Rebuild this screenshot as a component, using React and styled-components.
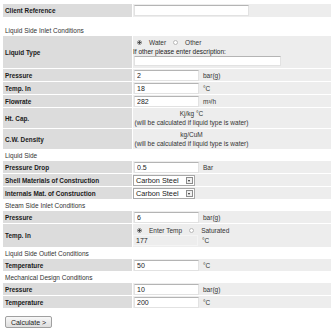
import styled, { createGlobalStyle } from 'styled-components';

const GlobalStyle = createGlobalStyle`
  html, body {
    margin: 0;
    padding: 0;
    background: #ffffff;
  }
`;

export default function App() {
  return (
    <>
      <GlobalStyle />
      <Page>
        <FormTable>
          <Row $h={13}>
            <Label>Client Reference</Label>
            <Value>
              <TextInput $w={115} />
            </Value>
          </Row>

          <Section $gap={7}>Liquid Side Inlet Conditions</Section>
          <Row $h={32}>
            <Label>Liquid Type</Label>
            <Value $stack>
              <RadioLine>
                <Radio $checked /> <span>Water</span>
                <Radio /> <span>Other</span>
              </RadioLine>
              <Hint>If other please enter description:</Hint>
              <TextInput $w={147} $h={10} />
            </Value>
          </Row>
          <InputRow label="Pressure" value="2" unit="bar(g)" />
          <InputRow label="Temp. In" value="18" unit="°C" />
          <InputRow label="Flowrate" value="282" unit="m³/h" />
          <Row $h={20}>
            <Label>Ht. Cap.</Label>
            <Value>
              <Note>
                Kj/kg °C
                <br />
                (will be calculated if liquid type is water)
              </Note>
            </Value>
          </Row>
          <Row $h={20}>
            <Label>C.W. Density</Label>
            <Value>
              <Note>
                kg/CuM
                <br />
                (will be calculated if liquid type is water)
              </Note>
            </Value>
          </Row>

          <Section>Liquid Side</Section>
          <InputRow label="Pressure Drop" value="0.5" unit="Bar" />
          <Row>
            <Label>Shell Materials of Construction</Label>
            <Value>
              <Select>
                Carbon Steel
                <SelectButton />
              </Select>
            </Value>
          </Row>
          <Row>
            <Label>Internals Mat. of Construction</Label>
            <Value>
              <Select>
                Carbon Steel
                <SelectButton />
              </Select>
            </Value>
          </Row>

          <Section>Steam Side Inlet Conditions</Section>
          <InputRow label="Pressure" value="6" unit="bar(g)" />
          <Row $h={23}>
            <Label>Temp. In</Label>
            <Value $stack>
              <RadioLine>
                <Radio $checked /> <span>Enter Temp</span>
                <Radio /> <span>Saturated</span>
              </RadioLine>
              <Field>
                <TextInput $w={65} $flat defaultValue="177" />
                <Unit>°C</Unit>
              </Field>
            </Value>
          </Row>

          <Section>Liquid Side Outlet Conditions</Section>
          <InputRow label="Temperature" value="50" unit="°C" />

          <Section>Mechanical Design Conditions</Section>
          <InputRow label="Pressure" value="10" unit="bar(g)" />
          <InputRow label="Temperature" value="200" unit="°C" />
        </FormTable>

        <CalcButton type="button">Calculate &gt;</CalcButton>
      </Page>
    </>
  );
}

function InputRow({ label, value, unit }) {
  return (
    <Row>
      <Label>{label}</Label>
      <Value>
        <Field>
          <TextInput $w={65} defaultValue={value} />
          <Unit>{unit}</Unit>
        </Field>
      </Value>
    </Row>
  );
}

const Page = styled.div`
  padding: 4px 3px 0 3px;
  font-family: "Liberation Sans", Arial, sans-serif;
  font-size: 6.5px;
  color: #333333;
`;

const FormTable = styled.div`
  display: flex;
  flex-direction: column;
  gap: 1px;
  width: 328px;
`;

const Row = styled.div`
  display: grid;
  grid-template-columns: 129px 1fr;
  column-gap: 1px;
  height: ${(p) => p.$h || 12}px;
`;

const Label = styled.div`
  display: flex;
  align-items: center;
  padding-left: 2px;
  background: #dcdcdc;
  color: #1a1a1a;
  font-weight: bold;
  font-size: 6.4px;
  white-space: nowrap;
`;

const Value = styled.div`
  display: flex;
  flex-direction: ${(p) => (p.$stack ? 'column' : 'row')};
  justify-content: ${(p) => (p.$stack ? 'flex-start' : 'flex-start')};
  align-items: ${(p) => (p.$stack ? 'flex-start' : 'center')};
  padding-top: ${(p) => (p.$stack ? '2px' : '0')};
  background: #ededed;
  white-space: nowrap;
`;

const Section = styled.div`
  display: flex;
  align-items: center;
  height: 10px;
  margin-top: ${(p) => p.$gap || 0}px;
  padding-left: 2px;
  color: #333333;
`;

const Field = styled.div`
  display: flex;
  align-items: center;
  gap: 4px;
`;

const TextInput = styled.input`
  box-sizing: border-box;
  width: ${(p) => p.$w}px;
  height: ${(p) => p.$h || 11}px;
  margin: 0 0 0 ${(p) => (p.$flat ? 0 : 1)}px;
  padding: 0 2px;
  border: 1px solid ${(p) => (p.$flat ? '#f4f4f4' : '#e2e2e2')};
  border-top-color: ${(p) => (p.$flat ? '#f4f4f4' : '#b4b4b4')};
  background: ${(p) => (p.$flat ? '#ededed' : '#ffffff')};
  font-family: "Liberation Sans", Arial, sans-serif;
  font-size: 7px;
  color: #222222;
  outline: none;
`;

const Unit = styled.span`
  color: #333333;
`;

const Hint = styled.div`
  height: 9px;
  line-height: 9px;
  color: #222222;
`;

const Note = styled.div`
  width: 117px;
  text-align: center;
  line-height: 9px;
  color: #333333;
`;

const RadioLine = styled.div`
  display: flex;
  align-items: center;
  gap: 2px;
  height: 9px;
  padding-left: 4px;

  span {
    margin-right: 5px;
  }
`;

const Radio = styled.span`
  box-sizing: border-box;
  width: 5px;
  height: 5px;
  border-radius: 50%;
  border: 1px solid ${(p) => (p.$checked ? '#8a8a8a' : '#b8b8b8')};
  background: ${(p) =>
    p.$checked ? 'radial-gradient(circle, #4a4a4a 0 1.2px, #ffffff 1.4px)' : '#ffffff'};
`;

const Select = styled.div`
  box-sizing: border-box;
  display: flex;
  align-items: center;
  justify-content: space-between;
  width: 62px;
  height: 11px;
  padding: 0 1px 0 2px;
  border: 1px solid #a8a8a8;
  background: #ffffff;
  font-size: 7.3px;
  color: #1a1a1a;
`;

const SelectButton = styled.span`
  position: relative;
  box-sizing: border-box;
  width: 7px;
  height: 7px;
  border: 1px solid #8c8c8c;
  background: #f0f0f0;

  &::after {
    content: '';
    position: absolute;
    left: 1px;
    top: 2px;
    border-left: 1.5px solid transparent;
    border-right: 1.5px solid transparent;
    border-top: 2px solid #222222;
  }
`;

const CalcButton = styled.button`
  box-sizing: border-box;
  display: block;
  width: 47px;
  height: 12px;
  margin: 8px 0 0 2px;
  padding: 0;
  border: 1px solid #a0a0a0;
  border-radius: 2px;
  background: linear-gradient(#f8f8f8, #dedede);
  font-family: "Liberation Sans", Arial, sans-serif;
  font-size: 7px;
  color: #222222;
`;
